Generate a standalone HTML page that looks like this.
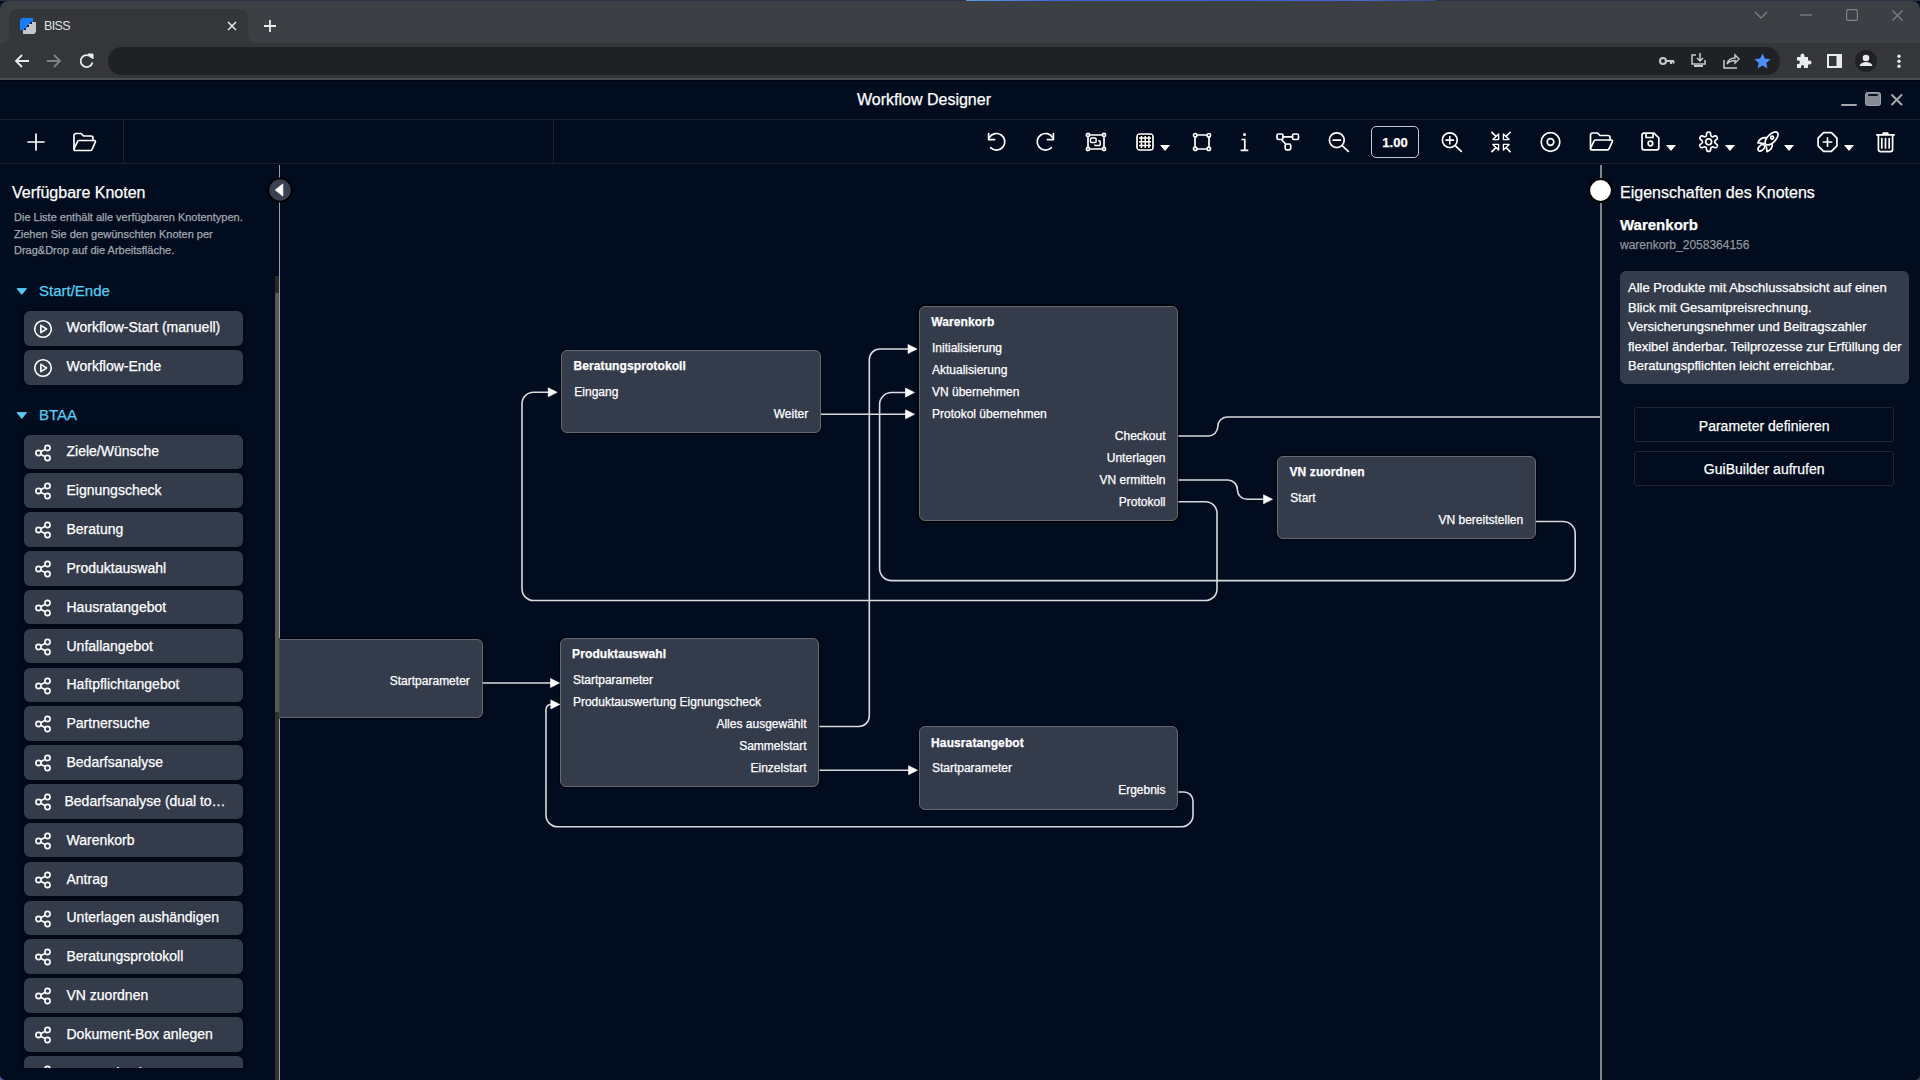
<!DOCTYPE html>
<html><head><meta charset="utf-8"><title>Workflow Designer</title>
<style>
*{box-sizing:border-box;margin:0;padding:0}
html,body{width:1920px;height:1080px;overflow:hidden}
body{background:#010c1e;font-family:"Liberation Sans", sans-serif;position:relative;color:#fff}
.a{position:absolute}
.t{position:absolute;white-space:nowrap;line-height:normal;-webkit-text-stroke:0.25px currentColor}
svg.a{overflow:visible}
</style></head><body>
<div class="a" style="left:0px;top:0px;width:1920px;height:1px;background:#2b3346;"></div>
<div class="a" style="left:966px;top:0;width:470px;height:1px;background:linear-gradient(90deg,#5a9be0,#4063d8 20%,#3d5fd6 60%,#4a6ad0 85%,#3a4a8a)"></div>
<div class="a" style="left:0;top:1px;width:1920px;height:79px;background:#3c3f43;border-radius:8px 8px 0 0"></div>
<div class="a" style="left:1px;top:35px;width:256px;height:8px;background:#35363a;"></div>
<div class="a" style="left:-7px;top:27px;width:16px;height:16px;background:#3c3f43;border-radius:0 0 8px 0"></div>
<div class="a" style="left:248px;top:27px;width:16px;height:16px;background:#3c3f43;border-radius:0 0 0 8px"></div>
<div class="a" style="left:9px;top:9px;width:239px;height:34px;background:#35363a;border-radius:8px 8px 0 0"></div>
<div class="a" style="left:0px;top:43px;width:1920px;height:33px;background:#35363a;"></div>
<div class="a" style="left:0px;top:75px;width:1920px;height:3px;background:#36373b;"></div>
<div class="a" style="left:0px;top:78px;width:1920px;height:2px;background:#4a4b50;"></div>
<div class="a" style="left:0px;top:80px;width:1920px;height:1px;background:#00040f;"></div>
<div class="a" style="left:108px;top:47px;width:1672px;height:28px;background:#202124;border-radius:14px"></div>
<svg class="a" style="left:20px;top:18px;" width="16" height="16" viewBox="0 0 16 16"><path d="M2 0H13V4H11V6H9V8H7V10H5V12H0V2Z" fill="#1a7cf5"/><path d="M13 4H16V14L14 16H3V12H5V10H7V8H9V6H11V4Z" fill="#c3c7cc"/><rect x="10" y="4" width="2" height="2" fill="#0a1a6a"/><rect x="7" y="7" width="2" height="2" fill="#1a1a2a"/><rect x="4" y="10" width="2" height="2" fill="#0a1a6a"/></svg>
<div class="t" style="left:44px;top:19.19px;font-size:12.5px;color:#dfe1e5;font-weight:400;letter-spacing:-0.6px;-webkit-text-stroke:0;">BISS</div>
<svg class="a" style="left:227px;top:21px;" width="10" height="10" viewBox="0 0 10 10"><path d="M1 1L9 9M9 1L1 9" stroke="#e8eaed" stroke-width="1.5"/></svg>
<svg class="a" style="left:263px;top:19px;" width="14" height="14" viewBox="0 0 14 14"><path d="M7 1V13M1 7H13" stroke="#e8eaed" stroke-width="1.8"/></svg>
<svg class="a" style="left:1754px;top:11px;" width="14" height="8" viewBox="0 0 14 8"><path d="M1 1L7 7L13 1" stroke="#7f8489" stroke-width="1.2" fill="none"/></svg>
<svg class="a" style="left:1800px;top:14px;" width="12" height="2" viewBox="0 0 12 2"><path d="M0 1H12" stroke="#7f8489" stroke-width="1.2"/></svg>
<svg class="a" style="left:1846px;top:9px;" width="12" height="12" viewBox="0 0 12 12"><rect x="0.6" y="0.6" width="10.8" height="10.8" rx="1.5" stroke="#7f8489" stroke-width="1.2" fill="none"/></svg>
<svg class="a" style="left:1892px;top:10px;" width="11" height="11" viewBox="0 0 11 11"><path d="M0.5 0.5L10.5 10.5M10.5 0.5L0.5 10.5" stroke="#7f8489" stroke-width="1.2"/></svg>
<svg class="a" style="left:14px;top:54px;" width="16" height="14" viewBox="0 0 16 14"><path d="M15 7H2M8 1L2 7L8 13" stroke="#e8eaed" stroke-width="1.8" fill="none"/></svg>
<svg class="a" style="left:46px;top:54px;" width="16" height="14" viewBox="0 0 16 14"><path d="M1 7H14M8 1L14 7L8 13" stroke="#7f8286" stroke-width="1.8" fill="none"/></svg>
<svg class="a" style="left:79px;top:53px;" width="15" height="16" viewBox="0 0 15 16"><path d="M12.5 4.5A6 6 0 1 0 13.5 9.5" stroke="#e8eaed" stroke-width="1.8" fill="none"/><path d="M9 1H14V6Z" fill="#e8eaed" stroke="#e8eaed" stroke-width="1"/></svg>
<svg class="a" style="left:1659px;top:55px;" width="16" height="12" viewBox="0 0 16 12"><circle cx="4" cy="6" r="3" stroke="#c6c9ce" stroke-width="2" fill="none"/><path d="M7 6H15M12 6V9M14.5 6V8.5" stroke="#c6c9ce" stroke-width="2" fill="none"/></svg>
<svg class="a" style="left:1690px;top:52px;" width="17" height="17" viewBox="0 0 17 17"><path d="M6 3H2V12H15V8" stroke="#c6c9ce" stroke-width="1.5" fill="none"/><path d="M10 1V9M7 6L10 9L13 6" stroke="#c6c9ce" stroke-width="1.5" fill="none"/><path d="M4 14H13" stroke="#c6c9ce" stroke-width="2"/></svg>
<svg class="a" style="left:1722px;top:53px;" width="18" height="16" viewBox="0 0 18 16"><path d="M2 7V15H15" stroke="#c6c9ce" stroke-width="1.5" fill="none"/><path d="M5 11C6 7 9 5 13 5V2L17 6L13 10V7.5C10 7.5 7 8.5 5 11Z" stroke="#c6c9ce" stroke-width="1.4" fill="none"/></svg>
<svg class="a" style="left:1754px;top:53px;" width="17" height="16" viewBox="0 0 17 16"><path d="M8.5 0.5L10.9 5.6L16.5 6.2L12.3 9.9L13.5 15.5L8.5 12.6L3.5 15.5L4.7 9.9L0.5 6.2L6.1 5.6Z" fill="#4b8ef5"/></svg>
<svg class="a" style="left:1795px;top:53px;" width="16" height="16" viewBox="0 0 16 16"><path d="M2 4H5.5V2.5A2 2 0 0 1 9.5 2.5V4H13V7.5H14.5A2 2 0 0 1 14.5 11.5H13V15H9V13.5A1.5 1.5 0 0 0 6 13.5V15H2V11H3.5A1.8 1.8 0 0 0 3.5 7.5H2Z" fill="#e8eaed"/></svg>
<svg class="a" style="left:1827px;top:53.5px;" width="15" height="14" viewBox="0 0 15 14"><rect x="1" y="1" width="13" height="12" stroke="#e8eaed" stroke-width="2" fill="none"/><rect x="9.5" y="1" width="4.5" height="12" fill="#e8eaed"/></svg>
<svg class="a" style="left:1855px;top:50px;" width="22" height="22" viewBox="0 0 22 22"><circle cx="11" cy="11" r="11" fill="#202124"/><circle cx="11" cy="8" r="3.3" fill="#e8eaed"/><path d="M4.5 16C5.5 13 8 12 11 12C14 12 16.5 13 17.5 16Z" fill="#e8eaed"/></svg>
<svg class="a" style="left:1896.6px;top:54px;" width="4" height="14" viewBox="0 0 4 14"><circle cx="2" cy="2.3" r="1.7" fill="#e8eaed"/><circle cx="2" cy="7.3" r="1.7" fill="#e8eaed"/><circle cx="2" cy="12.3" r="1.7" fill="#e8eaed"/></svg>
<div class="t" style="left:424px;width:1000px;text-align:center;top:90.52px;font-size:16px;color:#ffffff;font-weight:400;">Workflow Designer</div>
<div class="a" style="left:1841px;top:103.8px;width:16px;height:2.2px;background:#a3a7ae;border-radius:1.1px"></div>
<div class="a" style="left:1865px;top:92px;width:16px;height:14px;background:#868c95;border:1px solid #9fa3aa;border-radius:2.5px"></div>
<div class="a" style="left:1867.6px;top:94.4px;width:10.8px;height:1.7px;background:#0b1220;border-radius:1px"></div>
<svg class="a" style="left:1891px;top:93.5px;" width="11.5" height="11.5" viewBox="0 0 11.5 11.5"><path d="M1 1L10.5 10.5M10.5 1L1 10.5" stroke="#a9adb3" stroke-width="1.9" stroke-linecap="round"/></svg>
<div class="a" style="left:0px;top:119px;width:1920px;height:1px;background:#1b2230;"></div>
<div class="a" style="left:0px;top:163px;width:1920px;height:1px;background:#1b2230;"></div>
<div class="a" style="left:123px;top:120px;width:1px;height:43px;background:#1b2230;"></div>
<div class="a" style="left:553px;top:120px;width:1px;height:43px;background:#1b2230;"></div>
<svg class="a" style="left:27px;top:133px;" width="18" height="18" viewBox="0 0 18 18"><path d="M9 1V17M1 9H17" stroke="#ffffff" stroke-width="1.7" fill="none" stroke-linecap="round" stroke-linejoin="round"/></svg>
<svg class="a" style="left:72px;top:132px;" width="25" height="20" viewBox="0 0 25 20"><path d="M2 17V3.5A2 2 0 0 1 4 1.5H9L11.5 4H19A2 2 0 0 1 21 6V8.5" stroke="#ffffff" stroke-width="1.7" fill="none" stroke-linecap="round" stroke-linejoin="round"/><path d="M2 17L5.5 9.5A1.5 1.5 0 0 1 7 8.5H22.5A1 1 0 0 1 23.4 9.8L20 17.5A1.5 1.5 0 0 1 18.6 18.5H3A1 1 0 0 1 2 17.5Z" stroke="#ffffff" stroke-width="1.7" fill="none" stroke-linecap="round" stroke-linejoin="round"/></svg>
<svg class="a" style="left:986.6px;top:132.2px;" width="19" height="19" viewBox="0 0 19 19"><path d="M2.31 5.65A8.3 8.3 0 1 1 3.63 15.67" stroke="#ffffff" stroke-width="1.7" fill="none" stroke-linecap="round" stroke-linejoin="round"/><path d="M1.6 1.5V7.6H7.6" stroke="#ffffff" stroke-width="1.7" fill="none" stroke-linecap="round" stroke-linejoin="round"/></svg>
<svg class="a" style="left:1036.3px;top:132.2px;" width="19" height="19" viewBox="0 0 19 19"><path d="M16.69 5.65A8.3 8.3 0 1 0 15.37 15.67" stroke="#ffffff" stroke-width="1.7" fill="none" stroke-linecap="round" stroke-linejoin="round"/><path d="M17.4 1.5V7.6H11.4" stroke="#ffffff" stroke-width="1.7" fill="none" stroke-linecap="round" stroke-linejoin="round"/></svg>
<svg class="a" style="left:1086px;top:133px;" width="20" height="18" viewBox="0 0 20 18"><path d="M3.5 2H16.5M18 3.5V14.5M16.5 16H3.5M2 14.5V3.5" stroke="#ffffff" stroke-width="1.7" fill="none" stroke-linecap="round" stroke-linejoin="round"/><circle cx="2" cy="2" r="1.6" stroke="#ffffff" stroke-width="1.7" fill="none" stroke-linecap="round" stroke-linejoin="round"/><circle cx="18" cy="2" r="1.6" stroke="#ffffff" stroke-width="1.7" fill="none" stroke-linecap="round" stroke-linejoin="round"/><circle cx="2" cy="16" r="1.6" stroke="#ffffff" stroke-width="1.7" fill="none" stroke-linecap="round" stroke-linejoin="round"/><circle cx="18" cy="16" r="1.6" stroke="#ffffff" stroke-width="1.7" fill="none" stroke-linecap="round" stroke-linejoin="round"/><rect x="4.5" y="5.0" width="5.6" height="4.4" rx="1" stroke="#fff" stroke-width="1.5" fill="none"/><path d="M12.2 7.8H13A1.2 1.2 0 0 1 14.2 9V11.4A1.2 1.2 0 0 1 13 12.6H9.8A1.2 1.2 0 0 1 8.6 11.4" stroke="#fff" stroke-width="1.5" fill="none"/></svg>
<svg class="a" style="left:1136px;top:133px;" width="18" height="18" viewBox="0 0 18 18"><rect x="1" y="1" width="16" height="16" rx="3" stroke="#ffffff" stroke-width="1.7" fill="none" stroke-linecap="round" stroke-linejoin="round"/><rect x="2" y="2" width="14" height="14" fill="#000"/><path d="M5.4 3V15M9.2 3V15M12.9 3V15M3 4.9H15M3 8.7H15M3 12.5H15" stroke="#ffffff" stroke-width="1.5" fill="none"/></svg>
<svg class="a" style="left:1160px;top:145px;" width="10" height="6" viewBox="0 0 10 6"><path d="M0 0H10L5 6Z" fill="#ffffff"/></svg>
<svg class="a" style="left:1193px;top:133px;" width="18" height="18" viewBox="0 0 18 18"><path d="M4 2H14M16 4V14M14 16H4M2 14V4" stroke="#ffffff" stroke-width="1.7" fill="none" stroke-linecap="round" stroke-linejoin="round"/><circle cx="2.2" cy="2.2" r="1.7" stroke="#ffffff" stroke-width="1.7" fill="none" stroke-linecap="round" stroke-linejoin="round"/><circle cx="15.8" cy="2.2" r="1.7" stroke="#ffffff" stroke-width="1.7" fill="none" stroke-linecap="round" stroke-linejoin="round"/><circle cx="2.2" cy="15.8" r="1.7" stroke="#ffffff" stroke-width="1.7" fill="none" stroke-linecap="round" stroke-linejoin="round"/><circle cx="15.8" cy="15.8" r="1.7" stroke="#ffffff" stroke-width="1.7" fill="none" stroke-linecap="round" stroke-linejoin="round"/></svg>
<svg class="a" style="left:1240px;top:133px;" width="9" height="19" viewBox="0 0 9 19"><circle cx="4.5" cy="1.6" r="1.5" fill="#ffffff"/><path d="M1.5 6.5H4.8V17.3M0.6 17.3H8.3" stroke="#ffffff" stroke-width="1.7" fill="none"/></svg>
<svg class="a" style="left:1276px;top:133px;" width="24" height="18" viewBox="0 0 24 18"><rect x="1" y="1" width="6" height="5.5" rx="1.5" stroke="#ffffff" stroke-width="1.7" fill="none" stroke-linecap="round" stroke-linejoin="round"/><rect x="16.5" y="1" width="6" height="5.5" rx="1.5" stroke="#ffffff" stroke-width="1.7" fill="none" stroke-linecap="round" stroke-linejoin="round"/><rect x="9.2" y="11" width="5.5" height="5.8" rx="1.5" stroke="#ffffff" stroke-width="1.7" fill="none" stroke-linecap="round" stroke-linejoin="round"/><path d="M7 3.8H16.5M5.5 6.5L9.8 11.2" stroke="#ffffff" stroke-width="1.7" fill="none" stroke-linecap="round" stroke-linejoin="round"/></svg>
<svg class="a" style="left:1328px;top:132px;" width="21" height="20" viewBox="0 0 21 20"><circle cx="8.8" cy="8.2" r="7.4" stroke="#ffffff" stroke-width="1.7" fill="none" stroke-linecap="round" stroke-linejoin="round"/><path d="M14.2 13.6L20.3 19.4M5.2 8.2H12.4" stroke="#ffffff" stroke-width="1.7" fill="none" stroke-linecap="round" stroke-linejoin="round"/></svg>
<div class="a" style="left:1371px;top:126px;width:48px;height:32px;border:1.3px solid #c7cbd1;border-radius:5px"></div>
<div class="t" style="left:895px;width:1000px;text-align:center;top:134.94px;font-size:13px;color:#ffffff;font-weight:700;">1.00</div>
<svg class="a" style="left:1441px;top:132px;" width="21" height="20" viewBox="0 0 21 20"><circle cx="8.8" cy="8.2" r="7.4" stroke="#ffffff" stroke-width="1.7" fill="none" stroke-linecap="round" stroke-linejoin="round"/><path d="M14.2 13.6L20.3 19.4M5.2 8.2H12.4M8.8 4.6V11.8" stroke="#ffffff" stroke-width="1.7" fill="none" stroke-linecap="round" stroke-linejoin="round"/></svg>
<svg class="a" style="left:1491px;top:132px;" width="20" height="20" viewBox="0 0 20 20"><path d="M0.9 0.3L4.6 4M19.1 0.3L15.4 4M0.9 19.7L4.6 16M19.1 19.7L15.4 16" stroke="#ffffff" stroke-width="1.7" fill="none" stroke-linecap="round" stroke-linejoin="round"/><path d="M1.9 7.6H7.6V1.9Z M18.1 7.6H12.4V1.9Z M1.9 12.4H7.6V18.1Z M18.1 12.4H12.4V18.1Z" stroke="#fff" stroke-width="1.4" fill="none" stroke-linejoin="round"/></svg>
<svg class="a" style="left:1540px;top:132px;" width="21" height="20" viewBox="0 0 21 20"><circle cx="10.5" cy="10" r="9.3" stroke="#ffffff" stroke-width="1.7" fill="none" stroke-linecap="round" stroke-linejoin="round"/><circle cx="10.5" cy="10" r="3.3" stroke="#ffffff" stroke-width="1.7" fill="none" stroke-linecap="round" stroke-linejoin="round"/></svg>
<svg class="a" style="left:1589px;top:132.3px;" width="25" height="19" viewBox="0 0 25 19"><path d="M1.5 16V3A2 2 0 0 1 3.5 1H8.5L11 3.5H19A2 2 0 0 1 21 5.5V8" stroke="#ffffff" stroke-width="1.7" fill="none" stroke-linecap="round" stroke-linejoin="round"/><path d="M1.5 16.5L5 9A1.5 1.5 0 0 1 6.5 8H22.5A1 1 0 0 1 23.4 9.3L20 16.8A1.5 1.5 0 0 1 18.6 17.8H2.5A1 1 0 0 1 1.5 16.8Z" stroke="#ffffff" stroke-width="1.7" fill="none" stroke-linecap="round" stroke-linejoin="round"/></svg>
<svg class="a" style="left:1641px;top:132.4px;" width="19" height="19" viewBox="0 0 19 19"><path d="M3 1.2H13L17.8 6V15.8A2 2 0 0 1 15.8 17.8H3A2 2 0 0 1 1 15.8V3.2A2 2 0 0 1 3 1.2Z" stroke="#ffffff" stroke-width="1.7" fill="none" stroke-linecap="round" stroke-linejoin="round"/><path d="M5 1.5V5.5H12V1.5" stroke="#ffffff" stroke-width="1.7" fill="none" stroke-linecap="round" stroke-linejoin="round"/><circle cx="9.4" cy="11.5" r="2.3" stroke="#ffffff" stroke-width="1.7" fill="none" stroke-linecap="round" stroke-linejoin="round"/></svg>
<svg class="a" style="left:1666px;top:145px;" width="10" height="6" viewBox="0 0 10 6"><path d="M0 0H10L5 6Z" fill="#ffffff"/></svg>
<svg class="a" style="left:1699px;top:132px;" width="20" height="20" viewBox="0 0 20 20"><path d="M9.60 0.15L9.94 0.16L10.27 0.21L10.60 0.29L10.91 0.45L11.20 0.72L11.44 1.16L11.59 1.80L11.68 2.54L11.75 3.17L11.85 3.62L11.98 3.91L12.14 4.10L12.31 4.24L12.49 4.36L12.67 4.47L12.86 4.58L13.06 4.67L13.27 4.75L13.51 4.79L13.83 4.76L14.26 4.62L14.85 4.36L15.53 4.07L16.16 3.89L16.67 3.87L17.04 3.99L17.33 4.18L17.57 4.42L17.78 4.69L17.96 4.97L18.11 5.27L18.24 5.58L18.33 5.91L18.36 6.26L18.27 6.65L18.00 7.07L17.52 7.53L16.93 7.97L16.41 8.35L16.08 8.66L15.89 8.92L15.81 9.15L15.77 9.37L15.75 9.59L15.75 9.80L15.75 10.01L15.77 10.23L15.81 10.45L15.89 10.68L16.08 10.94L16.41 11.25L16.93 11.63L17.52 12.07L18.00 12.53L18.27 12.95L18.36 13.34L18.33 13.69L18.24 14.02L18.11 14.33L17.96 14.62L17.78 14.91L17.57 15.18L17.33 15.42L17.04 15.61L16.67 15.73L16.16 15.71L15.53 15.53L14.85 15.24L14.26 14.98L13.83 14.84L13.51 14.81L13.27 14.85L13.06 14.93L12.86 15.02L12.67 15.13L12.49 15.24L12.31 15.36L12.14 15.50L11.98 15.69L11.85 15.98L11.75 16.43L11.68 17.06L11.59 17.80L11.44 18.44L11.20 18.88L10.91 19.15L10.60 19.31L10.27 19.39L9.94 19.44L9.60 19.45L9.26 19.44L8.93 19.39L8.60 19.31L8.29 19.15L8.00 18.88L7.76 18.44L7.61 17.80L7.52 17.06L7.45 16.43L7.35 15.98L7.22 15.69L7.06 15.50L6.89 15.36L6.71 15.24L6.52 15.13L6.34 15.02L6.14 14.93L5.93 14.85L5.69 14.81L5.37 14.84L4.94 14.98L4.35 15.24L3.67 15.53L3.04 15.71L2.53 15.73L2.16 15.61L1.87 15.42L1.63 15.18L1.42 14.91L1.24 14.63L1.09 14.33L0.96 14.02L0.87 13.69L0.84 13.34L0.93 12.95L1.20 12.53L1.68 12.07L2.27 11.63L2.79 11.25L3.12 10.94L3.31 10.68L3.39 10.45L3.43 10.23L3.45 10.01L3.45 9.80L3.45 9.59L3.43 9.37L3.39 9.15L3.31 8.92L3.12 8.66L2.79 8.35L2.27 7.97L1.68 7.53L1.20 7.07L0.93 6.65L0.84 6.26L0.87 5.91L0.96 5.58L1.09 5.27L1.24 4.97L1.42 4.69L1.63 4.42L1.87 4.18L2.16 3.99L2.53 3.87L3.04 3.89L3.67 4.07L4.35 4.36L4.94 4.62L5.37 4.76L5.69 4.79L5.93 4.75L6.14 4.67L6.34 4.58L6.52 4.47L6.71 4.36L6.89 4.24L7.06 4.10L7.22 3.91L7.35 3.62L7.45 3.17L7.52 2.54L7.61 1.80L7.76 1.16L8.00 0.72L8.29 0.45L8.60 0.29L8.93 0.21L9.26 0.16L9.60 0.15Z" stroke="#ffffff" stroke-width="1.7" fill="none" stroke-linecap="round" stroke-linejoin="round"/><circle cx="9.6" cy="9.8" r="3.0" stroke="#ffffff" stroke-width="1.7" fill="none" stroke-linecap="round" stroke-linejoin="round"/></svg>
<svg class="a" style="left:1725px;top:145px;" width="10" height="6" viewBox="0 0 10 6"><path d="M0 0H10L5 6Z" fill="#ffffff"/></svg>
<svg class="a" style="left:1757px;top:132px;" width="22" height="20" viewBox="0 0 22 20"><ellipse cx="14.6" cy="6.4" rx="8.3" ry="4.1" transform="rotate(-45 14.6 6.4)" stroke="#ffffff" stroke-width="1.7" fill="none" stroke-linecap="round" stroke-linejoin="round"/><circle cx="15.1" cy="5.6" r="1.5" stroke="#ffffff" stroke-width="1.7" fill="none" stroke-linecap="round" stroke-linejoin="round"/><path d="M9.2 5.6C5.5 5.4 2.2 7.2 0.9 10.9C3.5 10.9 5.5 11.3 7.2 11.9" stroke="#ffffff" stroke-width="1.7" fill="none" stroke-linecap="round" stroke-linejoin="round"/><path d="M15.2 11.6C15.5 15.2 13.6 18.4 9.9 19.6C9.9 17.1 9.5 15.1 8.9 13.5" stroke="#ffffff" stroke-width="1.7" fill="none" stroke-linecap="round" stroke-linejoin="round"/><ellipse cx="4.4" cy="15.8" rx="3.9" ry="2.4" transform="rotate(-45 4.4 15.8)" stroke="#ffffff" stroke-width="1.7" fill="none" stroke-linecap="round" stroke-linejoin="round"/></svg>
<svg class="a" style="left:1784px;top:145px;" width="10" height="6" viewBox="0 0 10 6"><path d="M0 0H10L5 6Z" fill="#ffffff"/></svg>
<svg class="a" style="left:1817px;top:132px;" width="21" height="20" viewBox="0 0 21 20"><path d="M19.92 13.90L14.40 19.42L6.60 19.42L1.08 13.90L1.08 6.10L6.60 0.58L14.40 0.58L19.92 6.10Z" stroke="#ffffff" stroke-width="1.7" fill="none" stroke-linecap="round" stroke-linejoin="round"/><path d="M10.5 5.8V14.2M6.3 10H14.7" stroke="#ffffff" stroke-width="1.7" fill="none" stroke-linecap="round" stroke-linejoin="round"/></svg>
<svg class="a" style="left:1844px;top:145px;" width="10" height="6" viewBox="0 0 10 6"><path d="M0 0H10L5 6Z" fill="#ffffff"/></svg>
<svg class="a" style="left:1876px;top:132px;" width="19" height="21" viewBox="0 0 19 21"><path d="M0.9 2.9H18.1M7.2 2.6V1.2H11.8V2.6" stroke="#ffffff" stroke-width="1.7" fill="none" stroke-linecap="round" stroke-linejoin="round"/><path d="M2.4 3.2V17.4A2.2 2.2 0 0 0 4.6 19.6H14.4A2.2 2.2 0 0 0 16.6 17.4V3.2" stroke="#ffffff" stroke-width="1.7" fill="none" stroke-linecap="round" stroke-linejoin="round"/><path d="M5.8 6.6V15.9M9.5 6.6V15.9M13.2 6.6V15.9" stroke="#ffffff" stroke-width="1.7" fill="none" stroke-linecap="round" stroke-linejoin="round"/></svg>
<div class="t" style="left:12px;top:183.92px;font-size:16px;color:#ffffff;font-weight:400;">Verfügbare Knoten</div>
<div class="t" style="left:14px;top:210.94px;font-size:11px;color:#a3a8b0;font-weight:400;">Die Liste enthält alle verfügbaren Knotentypen.</div>
<div class="t" style="left:14px;top:227.64px;font-size:11px;color:#a3a8b0;font-weight:400;">Ziehen Sie den gewünschten Knoten per</div>
<div class="t" style="left:14px;top:244.04px;font-size:11px;color:#a3a8b0;font-weight:400;">Drag&amp;Drop auf die Arbeitsfläche.</div>
<svg class="a" style="left:15.8px;top:287.79999999999995px;" width="11.5" height="7" viewBox="0 0 11.5 7"><path d="M1 0.6H10.5L5.75 6.4Z" fill="#58cdf2" stroke="#58cdf2" stroke-width="0.9" stroke-linejoin="round"/></svg>
<div class="t" style="left:39px;top:281.82px;font-size:15px;color:#58cdf2;font-weight:400;">Start/Ende</div>
<div class="a" style="left:24px;top:310.90px;width:219px;height:34.7px;background:#343c4c;border-radius:6px;box-shadow:0 0 4px 1px rgba(0,0,0,0.35)"></div>
<svg class="a" style="left:33.3px;top:318.85px;" width="20" height="20" viewBox="0 0 20 20"><circle cx="10" cy="10" r="8.3" stroke="#fff" stroke-width="1.6" fill="none"/><path d="M7.9 6.4L13.5 10L7.9 13.6Z" stroke="#fff" stroke-width="1.7" fill="none" stroke-linejoin="round"/></svg>
<div class="t" style="left:66.5px;top:319.13px;font-size:14px;color:#ffffff;font-weight:400;">Workflow-Start (manuell)</div>
<div class="a" style="left:24px;top:349.90px;width:219px;height:34.7px;background:#343c4c;border-radius:6px;box-shadow:0 0 4px 1px rgba(0,0,0,0.35)"></div>
<svg class="a" style="left:33.3px;top:357.85px;" width="20" height="20" viewBox="0 0 20 20"><circle cx="10" cy="10" r="8.3" stroke="#fff" stroke-width="1.6" fill="none"/><path d="M7.9 6.4L13.5 10L7.9 13.6Z" stroke="#fff" stroke-width="1.7" fill="none" stroke-linejoin="round"/></svg>
<div class="t" style="left:66.5px;top:358.03px;font-size:14px;color:#ffffff;font-weight:400;">Workflow-Ende</div>
<svg class="a" style="left:15.8px;top:412.09999999999997px;" width="11.5" height="7" viewBox="0 0 11.5 7"><path d="M1 0.6H10.5L5.75 6.4Z" fill="#58cdf2" stroke="#58cdf2" stroke-width="0.9" stroke-linejoin="round"/></svg>
<div class="t" style="left:39px;top:406.12px;font-size:15px;color:#58cdf2;font-weight:400;">BTAA</div>
<div class="a" style="left:24px;top:434.60px;width:219px;height:34.5px;background:#343c4c;border-radius:6px;box-shadow:0 0 4px 1px rgba(0,0,0,0.35)"></div>
<svg class="a" style="left:34px;top:443.65000000000003px;" width="18" height="18" viewBox="0 0 18 18"><circle cx="4.5" cy="9" r="2.6" stroke="#fff" stroke-width="1.6" fill="none"/><circle cx="13.5" cy="4" r="2.6" stroke="#fff" stroke-width="1.6" fill="none"/><circle cx="13.5" cy="14" r="2.6" stroke="#fff" stroke-width="1.6" fill="none"/><path d="M6.8 7.7L11.2 5.3M6.8 10.3L11.2 12.7" stroke="#fff" stroke-width="1.6"/></svg>
<div class="t" style="left:66.5px;top:443.43px;font-size:14px;color:#ffffff;font-weight:400;">Ziele/Wünsche</div>
<div class="a" style="left:24px;top:473.43px;width:219px;height:34.5px;background:#343c4c;border-radius:6px;box-shadow:0 0 4px 1px rgba(0,0,0,0.35)"></div>
<svg class="a" style="left:34px;top:482.48px;" width="18" height="18" viewBox="0 0 18 18"><circle cx="4.5" cy="9" r="2.6" stroke="#fff" stroke-width="1.6" fill="none"/><circle cx="13.5" cy="4" r="2.6" stroke="#fff" stroke-width="1.6" fill="none"/><circle cx="13.5" cy="14" r="2.6" stroke="#fff" stroke-width="1.6" fill="none"/><path d="M6.8 7.7L11.2 5.3M6.8 10.3L11.2 12.7" stroke="#fff" stroke-width="1.6"/></svg>
<div class="t" style="left:66.5px;top:482.26px;font-size:14px;color:#ffffff;font-weight:400;">Eignungscheck</div>
<div class="a" style="left:24px;top:512.26px;width:219px;height:34.5px;background:#343c4c;border-radius:6px;box-shadow:0 0 4px 1px rgba(0,0,0,0.35)"></div>
<svg class="a" style="left:34px;top:521.31px;" width="18" height="18" viewBox="0 0 18 18"><circle cx="4.5" cy="9" r="2.6" stroke="#fff" stroke-width="1.6" fill="none"/><circle cx="13.5" cy="4" r="2.6" stroke="#fff" stroke-width="1.6" fill="none"/><circle cx="13.5" cy="14" r="2.6" stroke="#fff" stroke-width="1.6" fill="none"/><path d="M6.8 7.7L11.2 5.3M6.8 10.3L11.2 12.7" stroke="#fff" stroke-width="1.6"/></svg>
<div class="t" style="left:66.5px;top:521.09px;font-size:14px;color:#ffffff;font-weight:400;">Beratung</div>
<div class="a" style="left:24px;top:551.09px;width:219px;height:34.5px;background:#343c4c;border-radius:6px;box-shadow:0 0 4px 1px rgba(0,0,0,0.35)"></div>
<svg class="a" style="left:34px;top:560.14px;" width="18" height="18" viewBox="0 0 18 18"><circle cx="4.5" cy="9" r="2.6" stroke="#fff" stroke-width="1.6" fill="none"/><circle cx="13.5" cy="4" r="2.6" stroke="#fff" stroke-width="1.6" fill="none"/><circle cx="13.5" cy="14" r="2.6" stroke="#fff" stroke-width="1.6" fill="none"/><path d="M6.8 7.7L11.2 5.3M6.8 10.3L11.2 12.7" stroke="#fff" stroke-width="1.6"/></svg>
<div class="t" style="left:66.5px;top:559.92px;font-size:14px;color:#ffffff;font-weight:400;">Produktauswahl</div>
<div class="a" style="left:24px;top:589.92px;width:219px;height:34.5px;background:#343c4c;border-radius:6px;box-shadow:0 0 4px 1px rgba(0,0,0,0.35)"></div>
<svg class="a" style="left:34px;top:598.97px;" width="18" height="18" viewBox="0 0 18 18"><circle cx="4.5" cy="9" r="2.6" stroke="#fff" stroke-width="1.6" fill="none"/><circle cx="13.5" cy="4" r="2.6" stroke="#fff" stroke-width="1.6" fill="none"/><circle cx="13.5" cy="14" r="2.6" stroke="#fff" stroke-width="1.6" fill="none"/><path d="M6.8 7.7L11.2 5.3M6.8 10.3L11.2 12.7" stroke="#fff" stroke-width="1.6"/></svg>
<div class="t" style="left:66.5px;top:598.75px;font-size:14px;color:#ffffff;font-weight:400;">Hausratangebot</div>
<div class="a" style="left:24px;top:628.75px;width:219px;height:34.5px;background:#343c4c;border-radius:6px;box-shadow:0 0 4px 1px rgba(0,0,0,0.35)"></div>
<svg class="a" style="left:34px;top:637.8px;" width="18" height="18" viewBox="0 0 18 18"><circle cx="4.5" cy="9" r="2.6" stroke="#fff" stroke-width="1.6" fill="none"/><circle cx="13.5" cy="4" r="2.6" stroke="#fff" stroke-width="1.6" fill="none"/><circle cx="13.5" cy="14" r="2.6" stroke="#fff" stroke-width="1.6" fill="none"/><path d="M6.8 7.7L11.2 5.3M6.8 10.3L11.2 12.7" stroke="#fff" stroke-width="1.6"/></svg>
<div class="t" style="left:66.5px;top:637.58px;font-size:14px;color:#ffffff;font-weight:400;">Unfallangebot</div>
<div class="a" style="left:24px;top:667.58px;width:219px;height:34.5px;background:#343c4c;border-radius:6px;box-shadow:0 0 4px 1px rgba(0,0,0,0.35)"></div>
<svg class="a" style="left:34px;top:676.63px;" width="18" height="18" viewBox="0 0 18 18"><circle cx="4.5" cy="9" r="2.6" stroke="#fff" stroke-width="1.6" fill="none"/><circle cx="13.5" cy="4" r="2.6" stroke="#fff" stroke-width="1.6" fill="none"/><circle cx="13.5" cy="14" r="2.6" stroke="#fff" stroke-width="1.6" fill="none"/><path d="M6.8 7.7L11.2 5.3M6.8 10.3L11.2 12.7" stroke="#fff" stroke-width="1.6"/></svg>
<div class="t" style="left:66.5px;top:676.41px;font-size:14px;color:#ffffff;font-weight:400;">Haftpflichtangebot</div>
<div class="a" style="left:24px;top:706.41px;width:219px;height:34.5px;background:#343c4c;border-radius:6px;box-shadow:0 0 4px 1px rgba(0,0,0,0.35)"></div>
<svg class="a" style="left:34px;top:715.46px;" width="18" height="18" viewBox="0 0 18 18"><circle cx="4.5" cy="9" r="2.6" stroke="#fff" stroke-width="1.6" fill="none"/><circle cx="13.5" cy="4" r="2.6" stroke="#fff" stroke-width="1.6" fill="none"/><circle cx="13.5" cy="14" r="2.6" stroke="#fff" stroke-width="1.6" fill="none"/><path d="M6.8 7.7L11.2 5.3M6.8 10.3L11.2 12.7" stroke="#fff" stroke-width="1.6"/></svg>
<div class="t" style="left:66.5px;top:715.24px;font-size:14px;color:#ffffff;font-weight:400;">Partnersuche</div>
<div class="a" style="left:24px;top:745.24px;width:219px;height:34.5px;background:#343c4c;border-radius:6px;box-shadow:0 0 4px 1px rgba(0,0,0,0.35)"></div>
<svg class="a" style="left:34px;top:754.29px;" width="18" height="18" viewBox="0 0 18 18"><circle cx="4.5" cy="9" r="2.6" stroke="#fff" stroke-width="1.6" fill="none"/><circle cx="13.5" cy="4" r="2.6" stroke="#fff" stroke-width="1.6" fill="none"/><circle cx="13.5" cy="14" r="2.6" stroke="#fff" stroke-width="1.6" fill="none"/><path d="M6.8 7.7L11.2 5.3M6.8 10.3L11.2 12.7" stroke="#fff" stroke-width="1.6"/></svg>
<div class="t" style="left:66.5px;top:754.07px;font-size:14px;color:#ffffff;font-weight:400;">Bedarfsanalyse</div>
<div class="a" style="left:24px;top:784.07px;width:219px;height:34.5px;background:#343c4c;border-radius:6px;box-shadow:0 0 4px 1px rgba(0,0,0,0.35)"></div>
<svg class="a" style="left:34px;top:793.1199999999999px;" width="18" height="18" viewBox="0 0 18 18"><circle cx="4.5" cy="9" r="2.6" stroke="#fff" stroke-width="1.6" fill="none"/><circle cx="13.5" cy="4" r="2.6" stroke="#fff" stroke-width="1.6" fill="none"/><circle cx="13.5" cy="14" r="2.6" stroke="#fff" stroke-width="1.6" fill="none"/><path d="M6.8 7.7L11.2 5.3M6.8 10.3L11.2 12.7" stroke="#fff" stroke-width="1.6"/></svg>
<div class="t" style="left:64.5px;top:792.90px;font-size:14px;color:#ffffff;font-weight:400;">Bedarfsanalyse (dual to…</div>
<div class="a" style="left:24px;top:822.90px;width:219px;height:34.5px;background:#343c4c;border-radius:6px;box-shadow:0 0 4px 1px rgba(0,0,0,0.35)"></div>
<svg class="a" style="left:34px;top:831.9499999999999px;" width="18" height="18" viewBox="0 0 18 18"><circle cx="4.5" cy="9" r="2.6" stroke="#fff" stroke-width="1.6" fill="none"/><circle cx="13.5" cy="4" r="2.6" stroke="#fff" stroke-width="1.6" fill="none"/><circle cx="13.5" cy="14" r="2.6" stroke="#fff" stroke-width="1.6" fill="none"/><path d="M6.8 7.7L11.2 5.3M6.8 10.3L11.2 12.7" stroke="#fff" stroke-width="1.6"/></svg>
<div class="t" style="left:66.5px;top:831.73px;font-size:14px;color:#ffffff;font-weight:400;">Warenkorb</div>
<div class="a" style="left:24px;top:861.73px;width:219px;height:34.5px;background:#343c4c;border-radius:6px;box-shadow:0 0 4px 1px rgba(0,0,0,0.35)"></div>
<svg class="a" style="left:34px;top:870.78px;" width="18" height="18" viewBox="0 0 18 18"><circle cx="4.5" cy="9" r="2.6" stroke="#fff" stroke-width="1.6" fill="none"/><circle cx="13.5" cy="4" r="2.6" stroke="#fff" stroke-width="1.6" fill="none"/><circle cx="13.5" cy="14" r="2.6" stroke="#fff" stroke-width="1.6" fill="none"/><path d="M6.8 7.7L11.2 5.3M6.8 10.3L11.2 12.7" stroke="#fff" stroke-width="1.6"/></svg>
<div class="t" style="left:66.5px;top:870.56px;font-size:14px;color:#ffffff;font-weight:400;">Antrag</div>
<div class="a" style="left:24px;top:900.56px;width:219px;height:34.5px;background:#343c4c;border-radius:6px;box-shadow:0 0 4px 1px rgba(0,0,0,0.35)"></div>
<svg class="a" style="left:34px;top:909.6099999999999px;" width="18" height="18" viewBox="0 0 18 18"><circle cx="4.5" cy="9" r="2.6" stroke="#fff" stroke-width="1.6" fill="none"/><circle cx="13.5" cy="4" r="2.6" stroke="#fff" stroke-width="1.6" fill="none"/><circle cx="13.5" cy="14" r="2.6" stroke="#fff" stroke-width="1.6" fill="none"/><path d="M6.8 7.7L11.2 5.3M6.8 10.3L11.2 12.7" stroke="#fff" stroke-width="1.6"/></svg>
<div class="t" style="left:66.5px;top:909.39px;font-size:14px;color:#ffffff;font-weight:400;">Unterlagen aushändigen</div>
<div class="a" style="left:24px;top:939.39px;width:219px;height:34.5px;background:#343c4c;border-radius:6px;box-shadow:0 0 4px 1px rgba(0,0,0,0.35)"></div>
<svg class="a" style="left:34px;top:948.4399999999999px;" width="18" height="18" viewBox="0 0 18 18"><circle cx="4.5" cy="9" r="2.6" stroke="#fff" stroke-width="1.6" fill="none"/><circle cx="13.5" cy="4" r="2.6" stroke="#fff" stroke-width="1.6" fill="none"/><circle cx="13.5" cy="14" r="2.6" stroke="#fff" stroke-width="1.6" fill="none"/><path d="M6.8 7.7L11.2 5.3M6.8 10.3L11.2 12.7" stroke="#fff" stroke-width="1.6"/></svg>
<div class="t" style="left:66.5px;top:948.22px;font-size:14px;color:#ffffff;font-weight:400;">Beratungsprotokoll</div>
<div class="a" style="left:24px;top:978.22px;width:219px;height:34.5px;background:#343c4c;border-radius:6px;box-shadow:0 0 4px 1px rgba(0,0,0,0.35)"></div>
<svg class="a" style="left:34px;top:987.27px;" width="18" height="18" viewBox="0 0 18 18"><circle cx="4.5" cy="9" r="2.6" stroke="#fff" stroke-width="1.6" fill="none"/><circle cx="13.5" cy="4" r="2.6" stroke="#fff" stroke-width="1.6" fill="none"/><circle cx="13.5" cy="14" r="2.6" stroke="#fff" stroke-width="1.6" fill="none"/><path d="M6.8 7.7L11.2 5.3M6.8 10.3L11.2 12.7" stroke="#fff" stroke-width="1.6"/></svg>
<div class="t" style="left:66.5px;top:987.05px;font-size:14px;color:#ffffff;font-weight:400;">VN zuordnen</div>
<div class="a" style="left:24px;top:1017.05px;width:219px;height:34.5px;background:#343c4c;border-radius:6px;box-shadow:0 0 4px 1px rgba(0,0,0,0.35)"></div>
<svg class="a" style="left:34px;top:1026.1px;" width="18" height="18" viewBox="0 0 18 18"><circle cx="4.5" cy="9" r="2.6" stroke="#fff" stroke-width="1.6" fill="none"/><circle cx="13.5" cy="4" r="2.6" stroke="#fff" stroke-width="1.6" fill="none"/><circle cx="13.5" cy="14" r="2.6" stroke="#fff" stroke-width="1.6" fill="none"/><path d="M6.8 7.7L11.2 5.3M6.8 10.3L11.2 12.7" stroke="#fff" stroke-width="1.6"/></svg>
<div class="t" style="left:66.5px;top:1025.88px;font-size:14px;color:#ffffff;font-weight:400;">Dokument-Box anlegen</div>
<div class="a" style="left:24px;top:1055.88px;width:219px;height:34.5px;background:#343c4c;border-radius:6px;box-shadow:0 0 4px 1px rgba(0,0,0,0.35)"></div>
<svg class="a" style="left:34px;top:1064.93px;" width="18" height="18" viewBox="0 0 18 18"><circle cx="4.5" cy="9" r="2.6" stroke="#fff" stroke-width="1.6" fill="none"/><circle cx="13.5" cy="4" r="2.6" stroke="#fff" stroke-width="1.6" fill="none"/><circle cx="13.5" cy="14" r="2.6" stroke="#fff" stroke-width="1.6" fill="none"/><path d="M6.8 7.7L11.2 5.3M6.8 10.3L11.2 12.7" stroke="#fff" stroke-width="1.6"/></svg>
<div class="t" style="left:66.5px;top:1064.71px;font-size:14px;color:#ffffff;font-weight:400;">Antrag drucken</div>
<div class="a" style="left:0px;top:1068px;width:274px;height:12px;background:#010c1e;"></div>
<div class="a" style="left:275px;top:276px;width:4px;height:17px;background:#2a2826;"></div>
<div class="a" style="left:275px;top:293px;width:4px;height:419px;background:#5a5955;"></div>
<div class="a" style="left:275px;top:712px;width:4px;height:368px;background:#33312f;"></div>
<div class="a" style="left:279px;top:165px;width:1px;height:915px;background:#9a9ea5;"></div>
<svg class="a" style="left:267.2px;top:177px;" width="26" height="26" viewBox="0 0 26 26"><circle cx="13" cy="13" r="11.6" fill="#3a4150" stroke="#000" stroke-width="1.7"/><path d="M8.3 13L15.8 7V19Z" fill="#fff" stroke="#fff" stroke-width="0.8" stroke-linejoin="round"/></svg>
<div class="a" style="left:280px;top:638.9px;width:202.7px;height:79.1px;background:#343c4c;border:1.1px solid #656b74;border-left:none;border-radius:0 6px 6px 0;box-shadow:0 0 1px 1px rgba(0,0,0,0.6)"></div>
<div class="t" style="right:1450.2px;top:673.84px;font-size:12px;color:#ffffff;font-weight:400;">Startparameter</div>
<div class="a" style="left:561.0px;top:349.7px;width:260.0px;height:83.6px;background:#343c4c;border:1.1px solid #656b74;border-radius:6px;box-shadow:0 0 1px 1px rgba(0,0,0,0.6);"></div>
<div class="t" style="left:573.5px;top:359.14px;font-size:12px;color:#ffffff;font-weight:700;letter-spacing:0.1px;">Beratungsprotokoll</div>
<div class="t" style="left:574.3px;top:384.94px;font-size:12px;color:#ffffff;font-weight:400;">Eingang</div>
<div class="t" style="right:1111.8px;top:406.94px;font-size:12px;color:#ffffff;font-weight:400;">Weiter</div>
<div class="a" style="left:918.7px;top:305.6px;width:259.6px;height:215.6px;background:#343c4c;border:1.1px solid #656b74;border-radius:6px;box-shadow:0 0 0 1.6px #000;"></div>
<div class="t" style="left:931.2px;top:315.04px;font-size:12px;color:#ffffff;font-weight:700;letter-spacing:0.1px;">Warenkorb</div>
<div class="t" style="left:932.0px;top:340.84px;font-size:12px;color:#ffffff;font-weight:400;">Initialisierung</div>
<div class="t" style="left:932.0px;top:362.84px;font-size:12px;color:#ffffff;font-weight:400;">Aktualisierung</div>
<div class="t" style="left:932.0px;top:384.84px;font-size:12px;color:#ffffff;font-weight:400;">VN übernehmen</div>
<div class="t" style="left:932.0px;top:406.84px;font-size:12px;color:#ffffff;font-weight:400;">Protokol übernehmen</div>
<div class="t" style="right:754.5px;top:428.84px;font-size:12px;color:#ffffff;font-weight:400;">Checkout</div>
<div class="t" style="right:754.5px;top:450.84px;font-size:12px;color:#ffffff;font-weight:400;">Unterlagen</div>
<div class="t" style="right:754.5px;top:472.84px;font-size:12px;color:#ffffff;font-weight:400;">VN ermitteln</div>
<div class="t" style="right:754.5px;top:494.84px;font-size:12px;color:#ffffff;font-weight:400;">Protokoll</div>
<div class="a" style="left:1277.0px;top:455.7px;width:259.0px;height:83.6px;background:#343c4c;border:1.1px solid #656b74;border-radius:6px;box-shadow:0 0 1px 1px rgba(0,0,0,0.6);"></div>
<div class="t" style="left:1289.5px;top:465.14px;font-size:12px;color:#ffffff;font-weight:700;letter-spacing:0.1px;">VN zuordnen</div>
<div class="t" style="left:1290.3px;top:490.94px;font-size:12px;color:#ffffff;font-weight:400;">Start</div>
<div class="t" style="right:396.79999999999995px;top:512.94px;font-size:12px;color:#ffffff;font-weight:400;">VN bereitstellen</div>
<div class="a" style="left:559.6px;top:637.7px;width:259.7px;height:149.6px;background:#343c4c;border:1.1px solid #656b74;border-radius:6px;box-shadow:0 0 1px 1px rgba(0,0,0,0.6);"></div>
<div class="t" style="left:572.1px;top:647.14px;font-size:12px;color:#ffffff;font-weight:700;letter-spacing:0.1px;">Produktauswahl</div>
<div class="t" style="left:572.9px;top:672.94px;font-size:12px;color:#ffffff;font-weight:400;">Startparameter</div>
<div class="t" style="left:572.9px;top:694.94px;font-size:12px;color:#ffffff;font-weight:400;">Produktauswertung Eignungscheck</div>
<div class="t" style="right:1113.5px;top:716.94px;font-size:12px;color:#ffffff;font-weight:400;">Alles ausgewählt</div>
<div class="t" style="right:1113.5px;top:738.94px;font-size:12px;color:#ffffff;font-weight:400;">Sammelstart</div>
<div class="t" style="right:1113.5px;top:760.94px;font-size:12px;color:#ffffff;font-weight:400;">Einzelstart</div>
<div class="a" style="left:918.6px;top:726.2px;width:259.7px;height:83.6px;background:#343c4c;border:1.1px solid #656b74;border-radius:6px;box-shadow:0 0 1px 1px rgba(0,0,0,0.6);"></div>
<div class="t" style="left:931.1px;top:735.64px;font-size:12px;color:#ffffff;font-weight:700;letter-spacing:0.1px;">Hausratangebot</div>
<div class="t" style="left:931.9px;top:761.44px;font-size:12px;color:#ffffff;font-weight:400;">Startparameter</div>
<div class="t" style="right:754.5px;top:783.44px;font-size:12px;color:#ffffff;font-weight:400;">Ergebnis</div>
<svg class="a" style="left:0px;top:0px;pointer-events:none;" width="1920" height="1080" viewBox="0 0 1920 1080"><path d="M821.00 414.30L907.00 414.30" stroke="#d9dbde" stroke-width="1.6" fill="none"/><path d="M905.5 409.8L914.5 414.3L905.5 418.8Z" fill="#ffffff" stroke="#ffffff" stroke-width="0.6" stroke-linejoin="round"/><path d="M482.70 683.00L551.00 683.00" stroke="#d9dbde" stroke-width="1.6" fill="none"/><path d="M550.5 678.5L559.5 683.0L550.5 687.5Z" fill="#ffffff" stroke="#ffffff" stroke-width="0.6" stroke-linejoin="round"/><path d="M819.50 770.20L910.00 770.20" stroke="#d9dbde" stroke-width="1.6" fill="none"/><path d="M908.5 765.7L917.5 770.2L908.5 774.7Z" fill="#ffffff" stroke="#ffffff" stroke-width="0.6" stroke-linejoin="round"/><path d="M819.50 726.50L858.80 726.50A10.5 10.5 0 0 0 869.30 716.00L869.30 359.50A10.5 10.5 0 0 1 879.80 349.00L909.00 349.00" stroke="#d9dbde" stroke-width="1.6" fill="none"/><path d="M908.0 344.5L917.0 349.0L908.0 353.5Z" fill="#ffffff" stroke="#ffffff" stroke-width="0.6" stroke-linejoin="round"/><path d="M1178.50 501.80L1205.50 501.80A11.5 11.5 0 0 1 1217.00 513.30L1217.00 589.00A11.5 11.5 0 0 1 1205.50 600.50L533.50 600.50A11.5 11.5 0 0 1 522.00 589.00L522.00 403.80A11.5 11.5 0 0 1 533.50 392.30L549.00 392.30" stroke="#d9dbde" stroke-width="1.6" fill="none"/><path d="M548.2 387.8L557.2 392.3L548.2 396.8Z" fill="#ffffff" stroke="#ffffff" stroke-width="0.6" stroke-linejoin="round"/><path d="M1536.00 521.50L1563.20 521.50A12 12 0 0 1 1575.20 533.50L1575.20 568.60A12 12 0 0 1 1563.20 580.60L891.60 580.60A12 12 0 0 1 879.60 568.60L879.60 404.50A12 12 0 0 1 891.60 392.50L907.00 392.50" stroke="#d9dbde" stroke-width="1.6" fill="none"/><path d="M905.5 388.0L914.5 392.5L905.5 397.0Z" fill="#ffffff" stroke="#ffffff" stroke-width="0.6" stroke-linejoin="round"/><path d="M1178.50 480.00L1227.80 480.00A9.6 9.6 0 0 1 1237.40 489.60L1237.40 489.70A9.6 9.6 0 0 0 1247.00 499.30L1264.00 499.30" stroke="#d9dbde" stroke-width="1.6" fill="none"/><path d="M1263.5 494.8L1272.5 499.3L1263.5 503.8Z" fill="#ffffff" stroke="#ffffff" stroke-width="0.6" stroke-linejoin="round"/><path d="M1178.50 436.00L1208.30 436.00A9.5 9.5 0 0 0 1217.80 426.50L1217.80 426.50A9.5 9.5 0 0 1 1227.30 417.00L1601.00 417.00" stroke="#d9dbde" stroke-width="1.6" fill="none"/><path d="M1178.50 792.00L1184.00 792.00A9 9 0 0 1 1193.00 801.00L1193.00 815.30A11.5 11.5 0 0 1 1181.50 826.80L557.50 826.80A11.5 11.5 0 0 1 546.00 815.30L546.00 709.40A5 5 0 0 1 551.00 704.40L552.00 704.40" stroke="#d9dbde" stroke-width="1.6" fill="none"/><path d="M550.8 699.9L559.8 704.4L550.8 708.9Z" fill="#ffffff" stroke="#ffffff" stroke-width="0.6" stroke-linejoin="round"/></svg>
<div class="a" style="left:1601px;top:165px;width:319px;height:915px;background:#010c1e;"></div>
<div class="a" style="left:1600.2px;top:165px;width:1.8px;height:915px;background:#80858c;"></div>
<svg class="a" style="left:1587.8px;top:177.5px;" width="25" height="25" viewBox="0 0 25 25"><circle cx="12.5" cy="12.5" r="11.4" fill="#ffffff" stroke="#000" stroke-width="2"/></svg>
<div class="t" style="left:1620px;top:184.42px;font-size:16px;color:#ffffff;font-weight:400;">Eigenschaften des Knotens</div>
<div class="t" style="left:1620px;top:216.33px;font-size:15px;color:#ffffff;font-weight:700;">Warenkorb</div>
<div class="t" style="left:1620px;top:238.14px;font-size:12px;color:#8f949b;font-weight:400;">warenkorb_2058364156</div>
<div class="a" style="left:1620px;top:271px;width:288.5px;height:112.5px;background:#343c4c;border-radius:6px"></div>
<div class="t" style="left:1628px;top:280.44px;font-size:13px;color:#ffffff;font-weight:400;">Alle Produkte mit Abschlussabsicht auf einen</div>
<div class="t" style="left:1628px;top:299.83px;font-size:13px;color:#ffffff;font-weight:400;">Blick mit Gesamtpreisrechnung.</div>
<div class="t" style="left:1628px;top:319.24px;font-size:13px;color:#ffffff;font-weight:400;">Versicherungsnehmer und Beitragszahler</div>
<div class="t" style="left:1628px;top:338.63px;font-size:13px;color:#ffffff;font-weight:400;">flexibel änderbar. Teilprozesse zur Erfüllung der</div>
<div class="t" style="left:1628px;top:358.03px;font-size:13px;color:#ffffff;font-weight:400;">Beratungspflichten leicht erreichbar.</div>
<div class="a" style="left:1634.3px;top:407px;width:260px;height:35.3px;border:1px solid #1f2633;border-radius:3px"></div>
<div class="t" style="left:1264.2px;width:1000px;text-align:center;top:417.93px;font-size:14px;color:#ffffff;font-weight:400;">Parameter definieren</div>
<div class="a" style="left:1634.3px;top:450.5px;width:260px;height:35.0px;border:1px solid #1f2633;border-radius:3px"></div>
<div class="t" style="left:1264.2px;width:1000px;text-align:center;top:461.33px;font-size:14px;color:#ffffff;font-weight:400;">GuiBuilder aufrufen</div>
<svg class="a" style="left:0px;top:1075px;" width="5" height="5" viewBox="0 0 5 5"><path d="M0 0A5 5 0 0 0 5 5H0Z" fill="#4a6aa8"/></svg>
<svg class="a" style="left:1915px;top:1075px;" width="5" height="5" viewBox="0 0 5 5"><path d="M5 0A5 5 0 0 1 0 5H5Z" fill="#3a3f48"/></svg>
</body></html>
